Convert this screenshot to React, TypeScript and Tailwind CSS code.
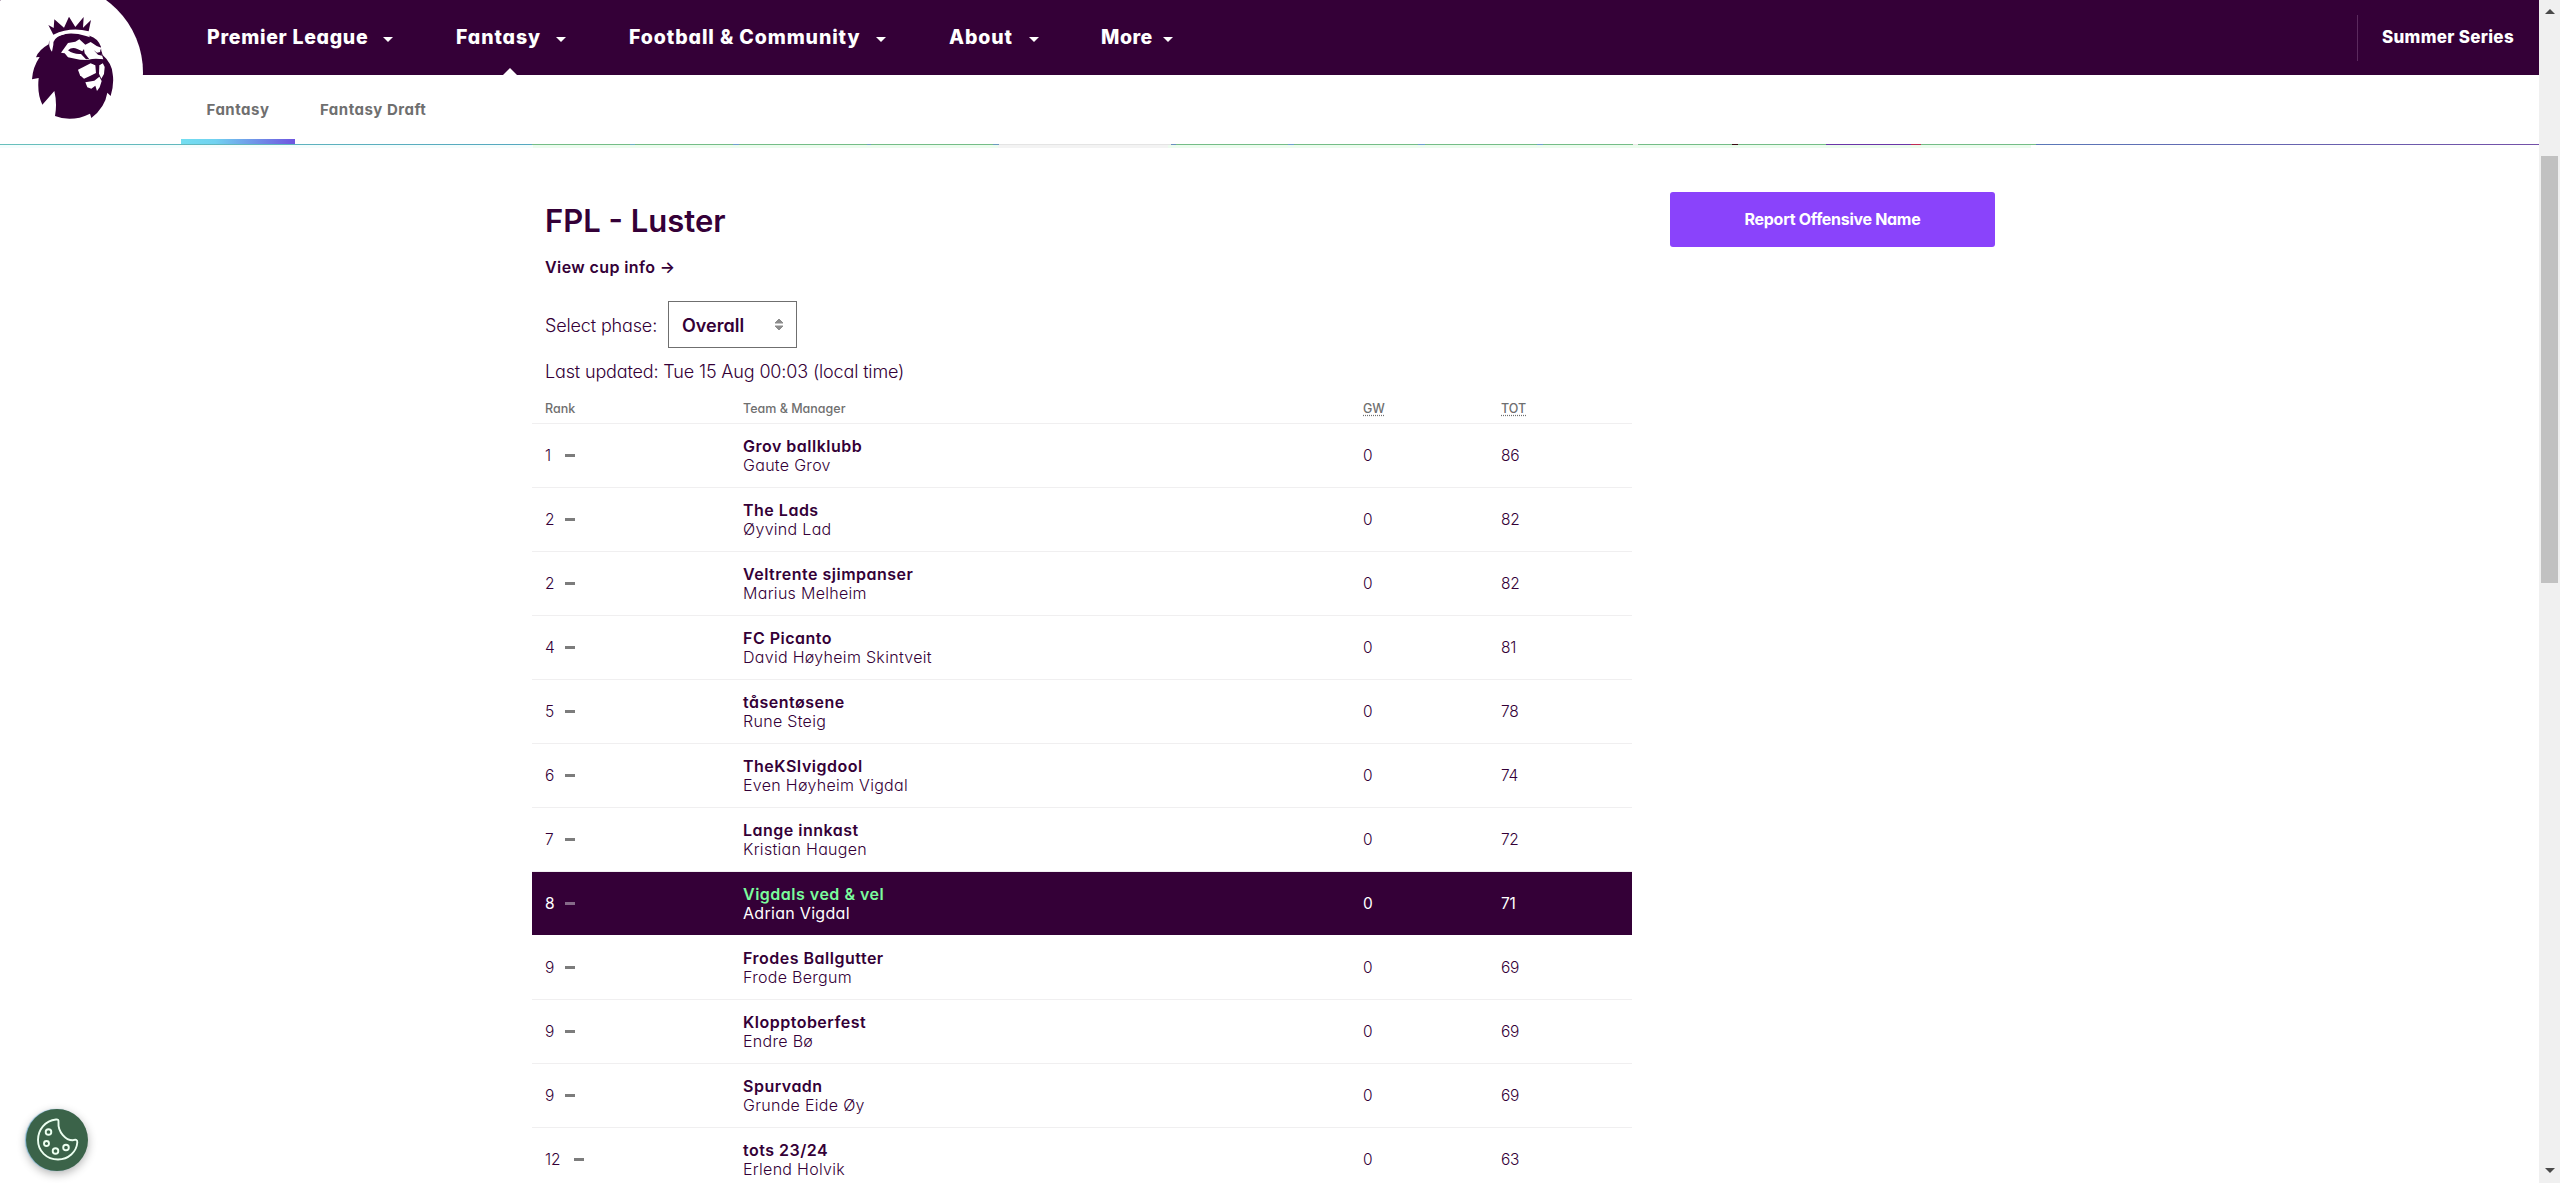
import React from "react";

type Row = {
  rank: string;
  team: string;
  manager: string;
  total: string;
  me?: boolean;
};

const rows: Row[] = [
  { rank: "1", team: "Grov ballklubb", manager: "Gaute Grov", total: "86" },
  { rank: "2", team: "The Lads", manager: "Øyvind Lad", total: "82" },
  { rank: "2", team: "Veltrente sjimpanser", manager: "Marius Melheim", total: "82" },
  { rank: "4", team: "FC Picanto", manager: "David Høyheim Skintveit", total: "81" },
  { rank: "5", team: "tåsentøsene", manager: "Rune Steig", total: "78" },
  { rank: "6", team: "TheKSIvigdool", manager: "Even Høyheim Vigdal", total: "74" },
  { rank: "7", team: "Lange innkast", manager: "Kristian Haugen", total: "72" },
  { rank: "8", team: "Vigdals ved & vel", manager: "Adrian Vigdal", total: "71", me: true },
  { rank: "9", team: "Frodes Ballgutter", manager: "Frode Bergum", total: "69" },
  { rank: "9", team: "Klopptoberfest", manager: "Endre Bø", total: "69" },
  { rank: "9", team: "Spurvadn", manager: "Grunde Eide Øy", total: "69" },
  { rank: "12", team: "tots 23/24", manager: "Erlend Holvik", total: "63" },
];

const nav = [
  { label: "Premier League", width: "w-[249px]", text: "w-[176px] tracking-[0.7px]" },
  { label: "Fantasy", width: "w-[173px]", text: "w-[100px] tracking-[0.9px]" },
  { label: "Football & Community", width: "w-[320px]", text: "w-[247px] tracking-[0.9px]" },
  { label: "About", width: "w-[152px]", text: "w-[80px] tracking-[0.9px]" },
  { label: "More", width: "w-[100px]", text: "w-[62px] tracking-[0.5px]" },
];

const stripes = [
  "w-[532px] bg-[linear-gradient(90deg,#68c0bc,#55a8c0)]",
  "w-[98px] bg-[#74bd87]",
  "w-[5px] bg-[#6fb0c4]",
  "w-[98px] bg-[#74bd87]",
  "w-[6px] bg-[#6f9fd0]",
  "w-[128px] bg-[#74bd87]",
  "w-[4px] bg-[#6fa0c0]",
  "w-[122px] bg-[#74bd87]",
  "w-[6px] bg-[#6a9ac0]",
  "w-[172px] bg-[#e4e4e4]",
  "w-[5px] bg-[#6a8fc0]",
  "w-[112px] bg-[#74bd87]",
  "w-[6px] bg-[#6f9fd0]",
  "w-[124px] bg-[#74bd87]",
  "w-[7px] bg-[#6f9fd0]",
  "w-[112px] bg-[#74bd87]",
  "w-[6px] bg-[#6f9fd0]",
  "w-[90px] bg-[#74bd87]",
  "w-[5px] bg-[#eee8e8]",
  "w-[94px] bg-[#74bd87]",
  "w-[6px] bg-[#3a0a12]",
  "w-[88px] bg-[#74bd87]",
  "w-[85px] bg-[#6a35a8]",
  "w-[10px] bg-[#c02a55]",
  "w-[115px] bg-[#74bd87]",
  "w-[504px] bg-[linear-gradient(90deg,#5a78b8,#7450a8)]",
];

function Caret() {
  return (
    <svg className="mt-[3px]" width="10" height="5" viewBox="0 0 10 5">
      <path d="M0 0h10L5 5z" fill="#fff" />
    </svg>
  );
}

function Lion() {
  return (
    <svg className="absolute left-[30px] top-[15px] h-[105px] w-[85px]" viewBox="90 45 255 315">
      <g fill="#340037">
        <path d="M145 75L161 84L163 58L192 83L207 50L226 81L251 51L249 83L273 60L266 94Q212 80 160 104Z" />
        <path d="M184 106Q222 90 258 104L270 108Q292 114 303 140Q302 150 308 165Q336 190 338 222Q343 250 332 288L322 278Q315 322 274 354L270 341Q215 368 165 348Q172 310 163 273L127 314Q111 282 116 234L96 238Q98 202 119 171L108 172Q116 150 146 133L147 126Q153 112 184 106Z" />
      </g>
      <g fill="#fff">
        <path d="M158 108Q205 84 262 98L270 112L258 108Q215 95 184 105Q158 116 160 134L156 155Q146 145 148 124Q148 115 158 108Z" />
        <path d="M183 158L204 129L226 125L238 118L256 134L272 126L290 138L304 143L300 154L306 166L310 178L300 177L282 178L262 180L240 179L204 172L194 160Z" />
        <path d="M234 209L272 190L286 196L288 219L270 228L252 236L240 226Z" />
        <path d="M298 196L308 189L314 201L312 222L304 236L297 221Z" />
        <path d="M256 247L283 242L298 230L305 243L299 262L291 273L286 257L274 266L262 262Z" />
      </g>
      <g fill="#340037">
        <path d="M204 151Q216 140 232 147L247 154L252 147L254 160L268 178L258 178L243 162Q222 164 204 151Z" />
        <path d="M281 150L291 158L304 155L306 167L294 164Z" />
        <path d="M266 180Q288 172 309 180L308 190L296 196L292 205L289 196L272 188Z" />
      </g>
    </svg>
  );
}

function Header() {
  return (
    <header className="relative h-[75px] bg-[#340037] text-white">
      <div className="flex h-full items-center overflow-hidden">
        <div className="w-[207px] shrink-0" />
        {nav.map((item) => (
          <div key={item.label} className={`relative flex h-full items-center whitespace-nowrap ${item.width}`}>
            <span className={`text-[19.5px] font-extrabold ${item.text}`}>{item.label}</span>
            <Caret />
            {item.label === "Fantasy" && (
              <svg className="absolute bottom-0 left-[47px]" width="14" height="7" viewBox="0 0 14 7">
                <path d="M7 0l7 7H0z" fill="#fff" />
              </svg>
            )}
          </div>
        ))}
        <div className="ml-auto h-[46px] w-px bg-[#5b2a5e]" />
        <span className="w-[181px] whitespace-nowrap pl-6 text-[17px] font-extrabold tracking-[0.3px]">
          Summer Series
        </span>
      </div>
      <div className="absolute left-0 top-0 h-[144px] w-[143px] overflow-hidden">
        <div className="absolute -left-9 -top-[17px] size-[179px] rounded-full bg-white" />
        <Lion />
      </div>
    </header>
  );
}

function SubNav() {
  return (
    <nav>
      <div className="flex h-[69px] pl-[181px] text-[15px] font-bold tracking-[0.5px] text-[#6f6f6f]">
        <div className="relative flex w-[114px] items-center justify-center pt-px">
          Fantasy
          <div className="absolute bottom-0 left-0 h-[5px] w-full bg-[linear-gradient(90deg,#72def0,#70d2f0_30%,#6f55e0)]" />
        </div>
        <div className="flex items-center whitespace-nowrap pl-[25px] pt-px">Fantasy Draft</div>
      </div>
      <div className="flex h-px">
        {stripes.map((s, i) => (
          <div key={i} className={`shrink-0 ${s}`} />
        ))}
      </div>
      <div className="h-[3px] bg-[linear-gradient(90deg,#f4fdfd_21%,#ecfcee_21%,#ecfcee_39.3%,#f3f3f3_39.3%,#f3f3f3_46%,#ecfcee_46%,#ecfcee_80%,#ffffff_80%)]" />
    </nav>
  );
}

function SelectPhase() {
  return (
    <div className="mt-[19px] flex h-[47px] items-center text-[18px] font-light">
      <span className="w-[123px] whitespace-nowrap pt-px tracking-[-0.15px]">Select phase:</span>
      <div className="flex h-full w-[129px] items-center justify-between border border-[#6f6f6f] pl-[13px] pr-3 font-semibold">
        <span className="pt-px">Overall</span>
        <svg width="10" height="13" viewBox="0 0 10 13" fill="#8c8c8c" stroke="#8c8c8c" strokeLinejoin="round">
          <path d="M5 1l4 4H1zM5 12L1 8h8z" />
        </svg>
      </div>
    </div>
  );
}

function Standings() {
  return (
    <div className="w-[1100px]">
      <div className="flex h-[39px] items-center border-b border-[#f0eff0] pl-[13px] pt-[10px] text-[12.5px] font-medium text-[#6f6f6f]">
        <span className="w-[198px]">Rank</span>
        <span className="w-[620px]">Team &amp; Manager</span>
        <span className="w-[138px]">
          <span className="underline decoration-dotted underline-offset-2">GW</span>
        </span>
        <span className="underline decoration-dotted underline-offset-2">TOT</span>
      </div>
      {rows.map((r, i) => (
        <div
          key={i}
          className={`flex h-16 items-center border-b pl-[13px] text-base ${
            r.me ? "border-white bg-[#340037] text-white" : "border-[#f0eff0] font-light"
          }`}
        >
          <div className="flex w-[198px] items-center">
            <span className={`text-[15.5px] ${r.rank.length > 1 ? "w-[18px]" : "w-[9px]"}`}>{r.rank}</span>
            <span className={`ml-[11px] h-[3px] w-[10px] ${r.me ? "bg-[#856a88]" : "bg-[#7c7c7c]"}`} />
          </div>
          <div className="w-[620px] leading-[19px]">
            <p className={`font-semibold tracking-[0.5px] ${r.me ? "text-[#7bfc9d]" : ""}`}>{r.team}</p>
            <p className="tracking-[0.3px]">{r.manager}</p>
          </div>
          <span className="w-[138px] text-[15.5px]">0</span>
          <span className="text-[15.5px] tracking-[-0.3px]">{r.total}</span>
        </div>
      ))}
    </div>
  );
}

function CookieButton() {
  return (
    <button className="absolute left-[26px] top-[1109px] size-[62px] rounded-full bg-[#3b6349] shadow-[-1px_0_1px_#7fb3d0,0_3px_10px_rgba(0,0,0,0.3)]">
      <svg viewBox="26 1109 62 62" fill="none" stroke="#ecfff0" strokeWidth="1.9">
        <path d="M56 1119.5C45 1120.5 38 1130 38 1140C38 1151 46.500 1159.500 58 1159.500C68.500 1159.500 76.500 1152 77.300 1142.500C77.500 1139.600 75.500 1139.300 73 1140.200C66 1140.500 57.700 1132 58.500 1122.500C58.700 1120 58 1119.300 56 1119.500Z" />
        <circle cx="48.500" cy="1132" r="2.800" />
        <circle cx="46.500" cy="1143.500" r="2.500" />
        <circle cx="55.500" cy="1151" r="2.800" />
        <circle cx="66" cy="1147.500" r="2.800" />
      </svg>
    </button>
  );
}

function Scrollbar() {
  return (
    <div className="flex w-[21px] flex-col items-center bg-[#f0f0f0]">
      <svg className="mt-[9px] shrink-0" width="10" height="5" viewBox="0 0 10 5">
        <path d="M5 0l5 5H0z" fill="#4a4a4a" />
      </svg>
      <div className="mt-[142px] h-[427px] w-[17px] shrink-0 bg-[#c1c1c1]" />
      <svg className="mb-[10px] mt-auto shrink-0" width="10" height="5" viewBox="0 0 10 5">
        <path d="M5 5L0 0h10z" fill="#4a4a4a" />
      </svg>
    </div>
  );
}

export default function App() {
  return (
    <div className="relative flex h-[1183px] w-[2560px] overflow-hidden bg-white font-['Inter','Liberation_Sans',sans-serif] text-[#340037] [font-feature-settings:'cv11']">
      <div className="h-full w-[2539px] shrink-0 overflow-hidden">
        <Header />
        <SubNav />
        <main className="flex pl-[532px]">
          <div className="w-[1138px] shrink-0">
            <div className="pl-[13px]">
              <h1 className="mt-[50px] text-[31px] font-semibold leading-[46px]">FPL - Luster</h1>
              <p className="mt-[9px] text-base font-semibold leading-[29px] tracking-[0.4px]">View cup info →</p>
              <SelectPhase />
              <p className="mt-[10px] text-[18px] font-light leading-7 tracking-[-0.15px]">
                Last updated: Tue 15 Aug 00:03 (local time)
              </p>
            </div>
            <div className="-mt-px">
              <Standings />
            </div>
          </div>
          <button className="mt-11 h-[55px] w-[325px] rounded-[3px] bg-[#8a43fb] pb-0.5 text-base font-bold tracking-[-0.3px] text-white">
            Report Offensive Name
          </button>
        </main>
      </div>
      <Scrollbar />
      <CookieButton />
    </div>
  );
}
